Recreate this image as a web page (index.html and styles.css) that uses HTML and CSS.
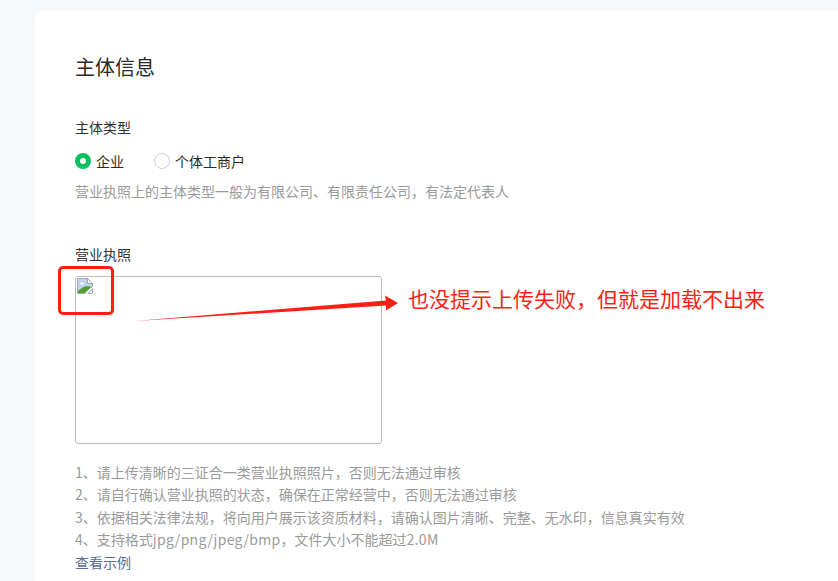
FILE: index.html
```html
<!DOCTYPE html>
<html lang="zh">
<head>
<meta charset="utf-8">
<title>主体信息</title>
<link rel="stylesheet" href="styles.css">
</head>
<body>
<main class="card">
  <h1 class="title">主体信息</h1>
  <div class="label first">主体类型</div>
  <div class="radios">
    <span class="radio"><i class="dot on"></i>企业</span>
    <span class="radio"><i class="dot"></i>个体工商户</span>
  </div>
  <p class="hint">营业执照上的主体类型一般为有限公司、有限责任公司，有法定代表人</p>
  <div class="label second">营业执照</div>
  <div class="upload">
    <svg class="broken" width="16" height="16" viewBox="0 0 16 16">
      <path d="M.5 .5H10.5L15.5 5.5V8.5L13 10L10 13L8 15.5H.5Z" fill="#bcd3f2" stroke="#a8a8a8"/>
      <path d="M10.5 .5V5.5H15.5Z" fill="#fff" stroke="#a8a8a8"/>
      <path d="M3 5.5C3 3.8 6 3.8 6.5 5C8 5 8 6.5 6.5 6.5H4C3 6.5 3 6 3 5.5Z" fill="#f4f8fd"/>
      <path d="M1 15V13L5 10C7 8.5 9 8 12.5 8.5L14 9.5L10 12.5L7.5 15Z" fill="#4f9e32"/>
      <path d="M15.5 10.5L11 15.5H15.5Z" fill="#fff" stroke="#a8a8a8"/>
    </svg>
  </div>
  <ul class="rules">
    <li>1、请上传清晰的三证合一类营业执照照片，否则无法通过审核</li>
    <li>2、请自行确认营业执照的状态，确保在正常经营中，否则无法通过审核</li>
    <li>3、依据相关法律法规，将向用户展示该资质材料，请确认图片清晰、完整、无水印，信息真实有效</li>
    <li>4、支持格式<span class="latin">jpg/png/jpeg/bmp</span>，文件大小不能超过<span class="latin">2.0M</span></li>
  </ul>
  <a class="example">查看示例</a>
</main>
<div class="mark-box"></div>
<svg class="arrow" width="270" height="40" viewBox="0 0 270 40">
  <path d="M3 29L254 8.5L253 3.5L266 11L254 18.5L254 13.5Z" fill="#fb1f14"/>
</svg>
<div class="note">也没提示上传失败，但就是加载不出来</div>
</body>
</html>
```
FILE: styles.css
```css
* { box-sizing: border-box; }
html, body { margin: 0; height: 581px; overflow: hidden; }
body {
  background: #f7f8fa;
  padding: 11px 0 0 35px;
  position: relative;
  font-family: "Noto Sans CJK SC", "Liberation Sans", sans-serif;
  font-size: 14px;
  color: #353535;
}
.card {
  background: #fff;
  border-radius: 10px 0 0 0;
  padding: 42px 0 0 40px;
  height: 570px;
}
.title {
  margin: 0;
  font-size: 20px;
  font-weight: 400;
  line-height: 28px;
  color: #2a2a2a;
}
.label { font-size: 14px; line-height: 20px; color: #333; }
.label.first { margin-top: 36px; }
.label.second { margin-top: 43px; }
.radios { display: flex; gap: 30px; margin-top: 14px; height: 20px; align-items: center; color: #2a2a2a; }
.radio { display: flex; align-items: center; gap: 5px; }
.dot {
  width: 16px; height: 16px; border-radius: 50%;
  border: 1px solid #cfcfd6; background: #fff;
}
.dot.on { border: 5px solid #07c160; }
.hint { margin: 10px 0 0; line-height: 20px; color: #9a9a9a; }
.upload {
  width: 307px; height: 168px; margin-top: 12px;
  border: 1px solid #bdbdbd; border-radius: 3px;
  padding: 1px 0 0 1px;
}
.broken { display: block; }
.rules { list-style: none; margin: 17px 0 0; padding: 0; line-height: 22.3px; color: #9a9a9a; }
.latin { letter-spacing: .3px; }
.example { display: block; margin-top: 1px; line-height: 22px; color: #576b95; }
.mark-box {
  position: absolute; left: 58px; top: 266px; width: 56px; height: 49px;
  border: 3px solid #fb1f14; border-radius: 5px;
}
.arrow { position: absolute; left: 132px; top: 292px; }
.note {
  position: absolute; left: 408px; top: 284px;
  font-size: 21px; line-height: 28px; color: #fb1f14;
}
```
